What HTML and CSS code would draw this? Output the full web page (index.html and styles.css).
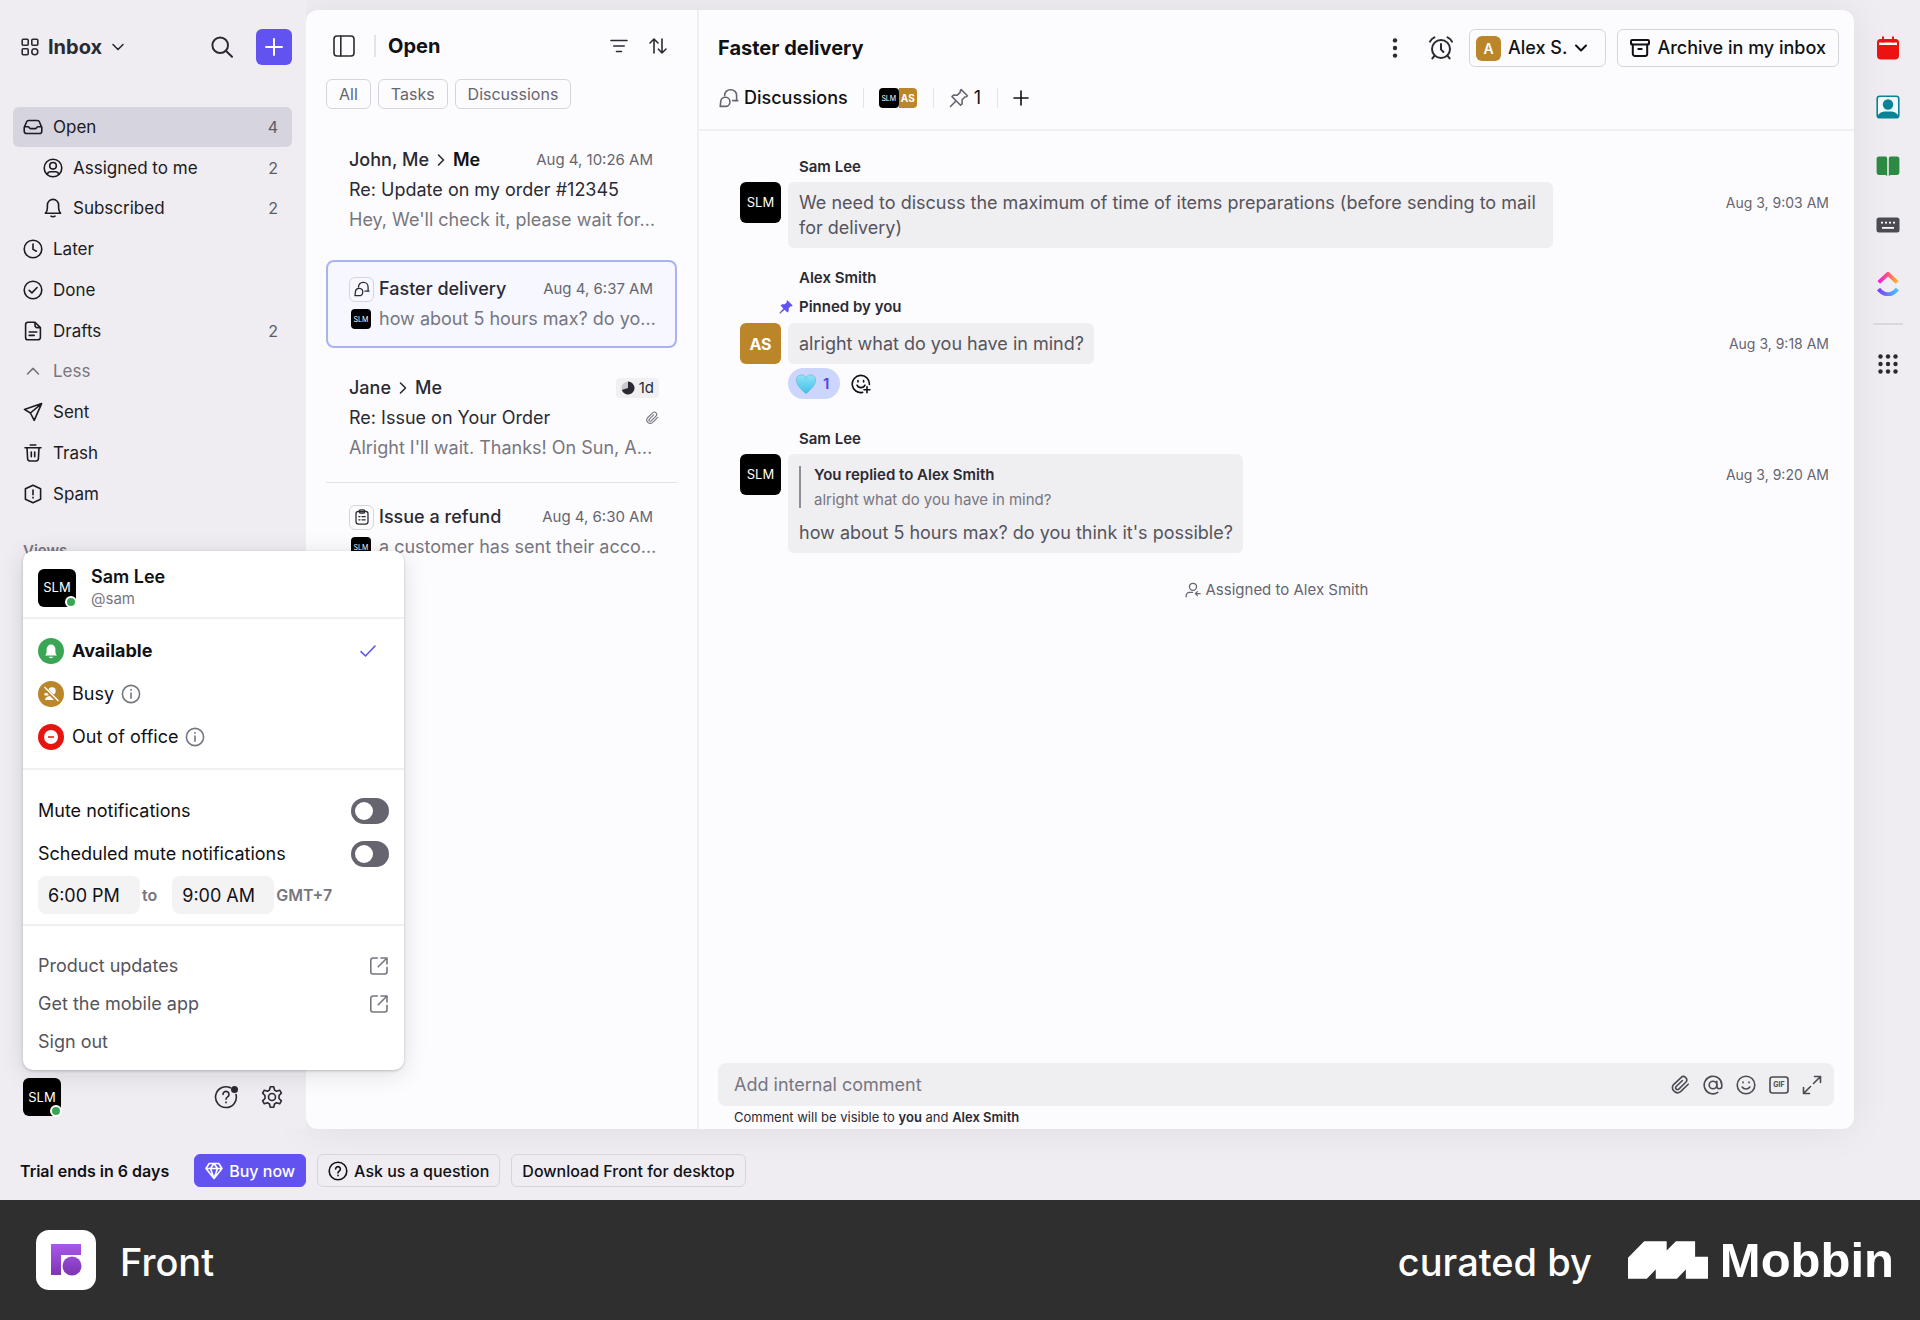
FILE: index.html
```html
<!DOCTYPE html>
<html lang="en">
<head>
  <meta charset="UTF-8" />
  <meta name="viewport" content="width=device-width, initial-scale=1.0" />
  <title>Front - Inbox</title>
  <link rel="stylesheet" href="styles.css">
</head>
<body>
  <!-- shared icons -->
  <svg class="sprite" aria-hidden="true">
    <symbol id="i-chat" viewBox="0 0 20 20">
      <path d="M5.600 7.600V7.400A5.600 5.600 0 0 1 11.200 1.800h.8a5.600 5.600 0 0 1 5.600 5.600V12.600h1.200M17.600 12.600H13.600"/>
      <path d="M1.200 18.400l.6-5.200a4.600 4.600 0 1 1 4.600 5.200z"/>
    </symbol>
    <symbol id="i-down" viewBox="0 0 14 14"><path d="M2 4.500l5 5 5-5"/></symbol>
    <symbol id="i-right" viewBox="0 0 14 14"><path d="M4.500 2l5 5-5 5"/></symbol>
    <symbol id="i-info" viewBox="0 0 20 20">
      <circle cx="10" cy="10" r="8.600"/><path d="M10 9v5.200M10 5.600v.6"/>
    </symbol>
    <symbol id="i-external" viewBox="0 0 20 20">
      <path d="M8.400 2H4a2.200 2.200 0 0 0-2.200 2.200v11.600A2.200 2.200 0 0 0 4 18h11.800a2.200 2.200 0 0 0 2.200-2.200v-4.400M9.200 10.800L18 2M12 2h6v6"/>
    </symbol>
    <symbol id="i-clip" viewBox="0 0 20 20">
      <path d="M18.200 9.200l-7.600 7.400a5 5 0 0 1-7-7L11 2.600a3.300 3.300 0 0 1 4.700 4.700L8.800 14.100a1.800 1.800 0 0 1-2.600-2.600l6.200-6"/>
    </symbol>
    <symbol id="i-help" viewBox="0 0 20 20">
      <circle cx="10" cy="10" r="8.800"/><path d="M7.600 8a2.400 2.400 0 1 1 3.600 2.100c-.8.5-1.200.9-1.200 1.800M10 14.200v.6"/>
    </symbol>
  </svg>

  <div class="app">
    <aside class="sidebar">
      <div class="sidebar-top">
        <button class="workspace">
          <svg class="icon s18" viewBox="0 0 18 18"><rect x="1.200" y="1.200" width="6" height="6" rx="1"/><rect x="10.800" y="1.200" width="6" height="6" rx="1"/><rect x="1.200" y="10.800" width="6" height="6" rx="1"/><circle cx="13.800" cy="13.800" r="3"/></svg>
          <span>Inbox</span>
          <svg class="icon s14"><use href="#i-down"/></svg>
        </button>
        <button class="search" aria-label="Search">
          <svg class="icon s22" viewBox="0 0 22 22"><circle cx="9.200" cy="9.200" r="7.800"/><path d="M14.800 14.800l6.200 6"/></svg>
        </button>
        <button class="compose" aria-label="Compose">
          <svg class="icon s18" viewBox="0 0 18 18"><path d="M9 1v16M1 9h16"/></svg>
        </button>
      </div>

      <nav>
        <ul class="nav-list">
          <li><a class="nav-item active" href="#">
            <svg class="icon s20" viewBox="0 0 20 20"><path d="M1.200 10.600l2.200-5.400a2.600 2.600 0 0 1 2.400-1.700h8.400a2.600 2.600 0 0 1 2.400 1.700l2.200 5.400v3.600a2.300 2.300 0 0 1-2.300 2.300h-13a2.300 2.300 0 0 1-2.300-2.300zM1.400 9.800h3.800c1 0 1.400 1.800 2.600 1.800h4.400c1.200 0 1.600-1.800 2.600-1.800h3.800"/></svg>
            <span>Open</span><span class="count">4</span></a></li>
          <li>
            <ul class="nav-sub">
              <li><a class="nav-item" href="#">
                <svg class="icon s20" viewBox="0 0 20 20"><circle cx="10" cy="10" r="8.800"/><circle cx="10" cy="7.800" r="3.300"/><path d="M4.200 16.400c.6-2 1.800-2.600 3.200-2.600h5.200c1.400 0 2.600.6 3.200 2.600"/></svg>
                <span>Assigned to me</span><span class="count">2</span></a></li>
              <li><a class="nav-item" href="#">
                <svg class="icon s20" viewBox="0 0 20 20"><path d="M2.400 15.200c1.800-1.600 2-3 2-5.400V7a5.600 5.600 0 0 1 11.200 0v2.800c0 2.400.2 3.800 2 5.400zM8 18.200c.8.7 3.200.7 4 0"/></svg>
                <span>Subscribed</span><span class="count">2</span></a></li>
            </ul>
          </li>
          <li><a class="nav-item" href="#">
            <svg class="icon s20" viewBox="0 0 20 20"><circle cx="10" cy="10" r="8.800"/><path d="M10 5v5.400l3.400 1.800"/></svg>
            <span>Later</span></a></li>
          <li><a class="nav-item" href="#">
            <svg class="icon s20" viewBox="0 0 20 20"><circle cx="10" cy="10" r="8.800"/><path d="M6.200 10.400l2.700 2.500 5.200-5.400"/></svg>
            <span>Done</span></a></li>
          <li><a class="nav-item" href="#">
            <svg class="icon s20" viewBox="0 0 20 20"><path d="M12 1.200H5A2.400 2.400 0 0 0 2.600 3.600v12.800A2.400 2.400 0 0 0 5 18.800h10a2.400 2.400 0 0 0 2.400-2.400V6.600zM12 1.200v3.200a2.200 2.200 0 0 0 2.200 2.200h3.200M6.200 11h7.600M6.200 14.400h5"/></svg>
            <span>Drafts</span><span class="count">2</span></a></li>
        </ul>
        <ul class="nav-list">
          <li><button class="nav-item less">
            <svg class="icon s20" viewBox="0 0 20 20"><path d="M4.500 13L10 7.400l5.500 5.600"/></svg>
            <span>Less</span></button></li>
          <li><a class="nav-item" href="#">
            <svg class="icon s20" viewBox="0 0 20 20"><path d="M18.600 1.600L1.400 7.400l6 3.600 3.800 7.400zM7.400 11l11.200-9.400"/></svg>
            <span>Sent</span></a></li>
          <li><a class="nav-item" href="#">
            <svg class="icon s20" viewBox="0 0 20 20"><path d="M2 4.800h16M7.200 2h5.600M4 4.800l.6 11a2.400 2.400 0 0 0 2.400 2.200h6a2.400 2.400 0 0 0 2.400-2.200l.6-11M8.300 9v4.800M11.700 9v4.800"/></svg>
            <span>Trash</span></a></li>
          <li><a class="nav-item" href="#">
            <svg class="icon s20" viewBox="0 0 20 20"><path d="M10 1.200l7.600 3.600v10.400L10 18.800l-7.600-3.600V4.800zM10 6v4.800M10 13.200v.8"/></svg>
            <span>Spam</span></a></li>
        </ul>
        <h2 class="nav-title">Views</h2>
      </nav>

      <div class="sidebar-bottom">
        <button class="avatar md" aria-label="Your profile">SLM<i class="presence"></i></button>
        <button class="help" aria-label="Help">
          <svg class="icon s24" viewBox="0 0 24 24"><path d="M16.500 2.800A10.400 10.400 0 1 0 22 9.500"/><path d="M9 9.400a3 3 0 1 1 4.600 2.500c-1 .7-1.600 1.200-1.600 2.300M12 17v.7"/><circle cx="20.500" cy="4.500" r="3.500" class="fill"/></svg>
        </button>
        <button aria-label="Settings">
          <svg class="icon s24" viewBox="0 0 24 24"><path d="M10.300 1.800h3.400l.8 3.200 2 1.200 3.200-1 1.700 3-2.400 2.300v3l2.400 2.300-1.700 3-3.200-1-2 1.200-.8 3.200h-3.400l-.8-3.200-2-1.200-3.200 1-1.700-3L5 13.500v-3L2.600 8.200l1.700-3 3.200 1 2-1.200z"/><circle cx="12" cy="12" r="3.500"/></svg>
        </button>

        <div class="menu">
          <div class="menu-user">
            <span class="avatar md">SLM<i class="presence"></i></span>
            <div>
              <strong>Sam Lee</strong>
              <span>@sam</span>
            </div>
          </div>
          <div class="menu-status">
            <label class="status">
              <input type="radio" name="status" checked>
              <svg class="dot" viewBox="0 0 26 26"><circle cx="13" cy="13" r="13" fill="#3aa655"/><path d="M7 17.600c1.200-1.300 1.600-2.400 1.600-4.600v-2a4.400 4.400 0 0 1 8.800 0v2c0 2.200.4 3.300 1.600 4.600zM10.800 18.800h4.400a2.200 1.400 0 0 1-4.400 0z" fill="#fff"/></svg>
              <span>Available</span>
              <svg class="icon s18 tick" viewBox="0 0 18 18"><path d="M2 9.600l4.500 4.400L16 4"/></svg>
            </label>
            <label class="status">
              <input type="radio" name="status">
              <svg class="dot" viewBox="0 0 26 26"><circle cx="13" cy="13" r="13" fill="#bb862a"/><circle cx="14" cy="10" r="3.700" fill="#fff"/><path d="M7 19c.5-3 2.500-4 6-4s5.500 1 6 4zM6.500 12h4v2.500h-4z" fill="#fff"/><path d="M6 6.500l14 14" stroke="#bb862a" stroke-width="3.500"/><path d="M6.500 6l14 14" stroke="#fff" stroke-width="1.500"/></svg>
              <span>Busy</span>
              <svg class="icon s20 info"><use href="#i-info"/></svg>
            </label>
            <label class="status">
              <input type="radio" name="status">
              <svg class="dot" viewBox="0 0 26 26"><circle cx="13" cy="13" r="13" fill="#e8140f"/><circle cx="13" cy="13" r="7" fill="#fff"/><path d="M10 13h6" stroke="#e8140f" stroke-width="1.500"/></svg>
              <span>Out of office</span>
              <svg class="icon s20 info"><use href="#i-info"/></svg>
            </label>
          </div>
          <div class="menu-mute">
            <label class="mute">Mute notifications <input class="toggle" type="checkbox"></label>
            <label class="mute">Scheduled mute notifications <input class="toggle" type="checkbox"></label>
            <div class="hours">
              <input type="text" value="6:00 PM" aria-label="Mute from">
              <span class="to">to</span>
              <input type="text" value="9:00 AM" aria-label="Mute until">
              <span>GMT+7</span>
            </div>
          </div>
          <div class="menu-links">
            <a href="#">Product updates <svg class="icon s20"><use href="#i-external"/></svg></a>
            <a href="#">Get the mobile app <svg class="icon s20"><use href="#i-external"/></svg></a>
            <a href="#">Sign out</a>
          </div>
        </div>
      </div>
    </aside>

    <main class="panel">
      <section class="list">
        <div class="list-top">
          <button aria-label="Toggle sidebar">
            <svg class="icon s22" viewBox="0 0 22 22"><rect x="1" y="1" width="20" height="20" rx="3"/><path d="M7.800 1v20"/></svg>
          </button>
          <h1>Open</h1>
          <button aria-label="Filter">
            <svg class="icon s20" viewBox="0 0 20 20"><path d="M2 4.500h16M4.800 10h10.400M7.500 15.500h5"/></svg>
          </button>
          <button aria-label="Sort">
            <svg class="icon s20" viewBox="0 0 20 20"><path d="M6 17V3M2 7l4-4 4 4M14 3v14M10.500 13.200L14 17l4-4"/></svg>
          </button>
        </div>
        <div class="chips">
          <button>All</button>
          <button>Tasks</button>
          <button>Discussions</button>
        </div>

        <div class="threads">
          <a class="thread" href="#">
            <div class="line">
              <span class="who">John, Me</span>
              <svg class="icon s14"><use href="#i-right"/></svg>
              <span class="who unread">Me</span>
              <time>Aug 4, 10:26 AM</time>
            </div>
            <div class="line subject">Re: Update on my order #12345</div>
            <div class="line preview">Hey, We'll check it, please wait for…</div>
          </a>
          <a class="thread selected" href="#">
            <div class="line">
              <span class="type"><svg class="icon s16"><use href="#i-chat"/></svg></span>
              <span class="who">Faster delivery</span>
              <time>Aug 4, 6:37 AM</time>
            </div>
            <div class="line preview"><span class="avatar xs">SLM</span>how about 5 hours max? do yo…</div>
          </a>
          <a class="thread" href="#">
            <div class="line">
              <span class="who">Jane</span>
              <svg class="icon s14"><use href="#i-right"/></svg>
              <span class="who">Me</span>
              <span class="age"><svg viewBox="0 0 14 14"><circle cx="7" cy="7" r="6.500" fill="#c9c9d0"/><path d="M7 7V.500a6.500 6.500 0 1 1-6.200 8.500z" fill="#2b2a33"/></svg>1d</span>
            </div>
            <div class="line subject">Re: Issue on Your Order <svg class="icon s14 attach"><use href="#i-clip"/></svg></div>
            <div class="line preview">Alright I'll wait. Thanks! On Sun, A…</div>
          </a>
          <a class="thread divided" href="#">
            <div class="line">
              <span class="type"><svg class="icon s16" viewBox="0 0 20 20"><rect x="2.500" y="3" width="15" height="16" rx="3"/><rect x="6.500" y="1" width="7" height="4" rx="1.500"/><path d="M6 9.500h1.500M10 9.500h4M6 13.500h1.500M10 13.500h4"/></svg></span>
              <span class="who">Issue a refund</span>
              <time>Aug 4, 6:30 AM</time>
            </div>
            <div class="line preview"><span class="avatar xs">SLM</span>a customer has sent their acco…</div>
          </a>
        </div>
      </section>

      <section class="conversation">
        <header class="conv-head">
          <div class="conv-title">
            <h2>Faster delivery</h2>
            <button aria-label="More">
              <svg class="icon s22" viewBox="0 0 22 22"><circle cx="11" cy="3.400" r="2.200" class="fill"/><circle cx="11" cy="11" r="2.200" class="fill"/><circle cx="11" cy="18.600" r="2.200" class="fill"/></svg>
            </button>
            <button class="snooze" aria-label="Snooze">
              <svg class="icon s24" viewBox="0 0 24 24"><circle cx="12" cy="13" r="9"/><path d="M12 8v5.400l2.400 2.600M1 5.600C2 3.600 3.400 2.300 5.400 1.400M23 5.600c-1-2-2.400-3.300-4.400-4.200M5.600 19.600L3.400 22.400M18.400 19.600l2.200 2.800"/></svg>
            </button>
            <button class="btn assignee"><span class="avatar-letter">A</span>Alex S. <svg class="icon s14"><use href="#i-down"/></svg></button>
            <button class="btn archive">
              <svg class="icon s20" viewBox="0 0 20 20"><rect x="1" y="2" width="18" height="4.600" rx="1.200"/><path d="M2.800 6.600v9.200A2.200 2.200 0 0 0 5 18h10a2.200 2.200 0 0 0 2.200-2.200V6.600M8.300 11h3.400"/></svg>
              Archive in my inbox
            </button>
          </div>
          <div class="conv-meta">
            <span class="meta kind"><svg class="icon s20"><use href="#i-chat"/></svg>Discussions</span>
            <span class="meta people"><span class="avatar xs">SLM</span><span class="avatar xs gold">AS</span></span>
            <span class="meta pins"><svg class="icon s20" viewBox="0 0 20 20"><path d="M1.500 18.500l5.200-5.200M12.200 1.600l6.200 6.200-1 1-1.600.2-2.800 3 .2 3.600-1.600 1.600L3 8.600 4.600 7l3.600.2 3-2.800.2-1.800z"/></svg>1</span>
            <button class="meta" aria-label="Add">
              <svg class="icon s16" viewBox="0 0 16 16"><path d="M8 1v14M1 8h14"/></svg>
            </button>
          </div>
        </header>

        <div class="messages">
          <article class="message">
            <h3>Sam Lee</h3>
            <div class="msg-row">
              <span class="avatar lg">SLM</span>
              <div class="bubble">We need to discuss the maximum of time of items preparations (before sending to mail for delivery)</div>
              <time>Aug 3, 9:03 AM</time>
            </div>
          </article>
          <article class="message">
            <h3>Alex Smith</h3>
            <h4><svg class="pin" viewBox="0 0 20 20"><path d="M12 .5L19.500 8l-1.500 1.200-1.600-.2-2.600 3 .2 3.600-2 2.200-4-4L1.500 19.500l-1-1L6.200 12 2.200 8l2.200-2 3.600.2 3-2.600-.2-1.600z"/></svg>Pinned by you</h4>
            <div class="msg-row">
              <span class="avatar lg gold">AS</span>
              <div class="bubble">alright what do you have in mind?</div>
              <time>Aug 3, 9:18 AM</time>
            </div>
            <div class="reactions">
              <button class="reaction">
                <svg viewBox="0 0 20 20"><defs><linearGradient id="heart" x1="0" y1="0" x2="0" y2="1"><stop offset="0" stop-color="#8fe3f7"/><stop offset="1" stop-color="#3fbfe8"/></linearGradient></defs><path d="M10 19.800C4.500 14.800.5 11 .5 6.200a4.900 4.900 0 0 1 9.500-2 4.900 4.900 0 0 1 9.500 2c0 4.800-4 8.600-9.500 13.600z" fill="url(#heart)" stroke="#5fb4d0" stroke-width=".6"/></svg>
                1
              </button>
              <button aria-label="Add reaction">
                <svg class="icon s20" viewBox="0 0 20 20"><path d="M11.600 18.400A8.600 8.600 0 1 1 18.400 10.400"/><path d="M6 11.200c1.600 3.200 6.400 3.200 8 0M7 6.600v1.400M12.600 6.600v1.400M16 12.800v6M13 15.800h6"/></svg>
              </button>
            </div>
          </article>
          <article class="message">
            <h3>Sam Lee</h3>
            <div class="msg-row">
              <span class="avatar lg">SLM</span>
              <div class="bubble">
                <blockquote><strong>You replied to Alex Smith</strong>alright what do you have in mind?</blockquote>
                how about 5 hours max? do you think it's possible?
              </div>
              <time>Aug 3, 9:20 AM</time>
            </div>
          </article>
          <p class="event"><svg class="icon s16" viewBox="0 0 20 20"><circle cx="10" cy="6" r="4.400"/><path d="M1.500 18.500v-1.500a4 4 0 0 1 4-4h4M19 14.500h-6M15.500 12l-2.500 2.500 2.500 2.500"/></svg>Assigned to Alex Smith</p>
        </div>

        <div class="composer">
          <div class="composer-box">
            <input type="text" placeholder="Add internal comment" aria-label="Add internal comment">
            <button aria-label="Attach"><svg class="icon s20"><use href="#i-clip"/></svg></button>
            <button aria-label="Mention"><svg class="icon s20" viewBox="0 0 20 20"><circle cx="10" cy="10" r="3.800"/><path d="M13.800 6.200v5a2.500 2.500 0 0 0 5 0V10a8.800 8.800 0 1 0-4 7.400"/></svg></button>
            <button aria-label="Emoji"><svg class="icon s20" viewBox="0 0 20 20"><circle cx="10" cy="10" r="8.800"/><path d="M6.200 12c1.600 2.600 6 2.600 7.600 0M7 7v.8M13 7v.8"/></svg></button>
            <button aria-label="GIF"><svg class="icon s20" viewBox="0 0 20 20"><rect x="1" y="2" width="18" height="16" rx="2.500"/><text x="10" y="12.400">GIF</text></svg></button>
            <button aria-label="Expand"><svg class="icon s20" viewBox="0 0 20 20"><path d="M11.500 8.500l7-7M12.500 1.500h6v6M8.500 11.500l-7 7M1.500 12.500v6h6"/></svg></button>
          </div>
          <p>Comment will be visible to <b>you</b> and <b>Alex Smith</b></p>
        </div>
      </section>
    </main>

    <aside class="rail">
      <button aria-label="Calendar"><svg viewBox="0 0 24 24"><path d="M4.500 3h15A3.500 3.500 0 0 1 23 6.500v13a4 4 0 0 1-4 4H5a4 4 0 0 1-4-4v-13A3.500 3.500 0 0 1 4.500 3z" fill="#ee1111"/><path d="M3 6.500h18v2.500H3z" fill="#fff"/><path d="M7 .5v6M17 .5v6" stroke="#ee1111" stroke-width="2"/></svg></button>
      <button aria-label="Contacts"><svg viewBox="0 0 24 24"><rect x="1.200" y="1.200" width="21.600" height="21.600" rx="2.600" fill="#f0fafb" stroke="#0a8494" stroke-width="1.600"/><circle cx="12" cy="9.500" r="5.200" fill="#0a8494"/><path d="M2 22.500v-2.500c2.200-2.800 4.600-3.600 7-3.600h6c2.400 0 4.800.8 7 3.600v2.500z" fill="#0a8494"/></svg></button>
      <button aria-label="Knowledge base"><svg viewBox="0 0 24 24"><path d="M3 2.500h6A2 2 0 0 1 11.200 4.500v17.500L9.500 21H3a2.400 2.400 0 0 1-2.400-2.400V5A2.400 2.400 0 0 1 3 2.500zM21 2.500h-6A2 2 0 0 0 12.800 4.500v17.500l1.700-1H21a2.400 2.400 0 0 0 2.400-2.400V5A2.400 2.400 0 0 0 21 2.500z" fill="#2c8a43"/></svg></button>
      <button aria-label="Shortcuts"><svg viewBox="0 0 24 24"><rect x=".5" y="4.500" width="23" height="15" rx="2.500" fill="#4c4a52"/><path d="M5 9.700h2M9 9.700h2M13 9.700h2M17 9.700h2M6 14.800h12" stroke="#fff" stroke-width="1.700"/></svg></button>
      <button aria-label="ClickUp"><svg viewBox="0 0 24 24"><defs><linearGradient id="cu1"><stop offset="0" stop-color="#f01ee0"/><stop offset=".5" stop-color="#fb5779"/><stop offset="1" stop-color="#ffb52b"/></linearGradient><linearGradient id="cu2"><stop offset="0" stop-color="#7a3ff5"/><stop offset="1" stop-color="#4cc2fb"/></linearGradient></defs><path d="M2.800 10.400L12 1.900l9.200 8.500" fill="none" stroke="url(#cu1)" stroke-width="4"/><path d="M2.600 17c5.200 7 13.600 7 18.800 0" fill="none" stroke="url(#cu2)" stroke-width="4"/></svg></button>
      <hr>
      <button aria-label="All apps"><svg viewBox="0 0 24 24" fill="#2b2a33"><circle cx="4.500" cy="4.500" r="2.200"/><circle cx="12" cy="4.500" r="2.200"/><circle cx="19.500" cy="4.500" r="2.200"/><circle cx="4.500" cy="12" r="2.200"/><circle cx="12" cy="12" r="2.200"/><circle cx="19.500" cy="12" r="2.200"/><circle cx="4.500" cy="19.500" r="2.200"/><circle cx="12" cy="19.500" r="2.200"/><circle cx="19.500" cy="19.500" r="2.200"/></svg></button>
    </aside>

    <div class="trial">
      <strong>Trial ends in 6 days</strong>
      <button class="btn-sm buy"><svg class="icon s18" viewBox="0 0 18 18"><path d="M4.200 1.500h9.600L17 6.500l-8 10-8-10zM1 6.500h16M9 1.500L5.500 6.500l3.500 10 3.500-10z"/></svg>Buy now</button>
      <button class="btn-sm"><svg class="icon s20"><use href="#i-help"/></svg>Ask us a question</button>
      <button class="btn-sm">Download Front for desktop</button>
    </div>
  </div>

  <footer class="credit">
    <svg class="front-logo" viewBox="0 0 60 60"><defs><linearGradient id="front" x1="0" y1="14" x2="0" y2="46" gradientUnits="userSpaceOnUse"><stop offset="0" stop-color="#a958ea"/><stop offset="1" stop-color="#7c33b3"/></linearGradient></defs><rect width="60" height="60" rx="13" fill="#fff"/><path d="M15 14h30v11H25v20H15z" fill="url(#front)"/><circle cx="36" cy="36" r="9.500" fill="url(#front)"/></svg>
    <span class="brand">Front</span>
    <span class="curated">curated by</span>
    <svg class="mobbin-logo" viewBox="81 600 242 113"><path d="M81 650l49-50h68v28l28-28h58v47h39v66h-67v-28l-27 28h-64v-28l-27 28H81z" fill="#fff"/></svg>
    <span class="mobbin">Mobbin</span>
  </footer>
</body>
</html>
```

FILE: styles.css
```css
* {
  box-sizing: border-box;
}

body {
  margin: 0;
  min-height: 100vh;
  display: flex;
  flex-direction: column;
  font-family: Inter, "Liberation Sans", sans-serif;
  font-size: 18px;
  line-height: 24px;
  color: #111114;
  background: #efedf2;
}

h1, h2, h3, h4, p, ul, blockquote {
  margin: 0;
  padding: 0;
}

ul {
  list-style: none;
}

a {
  color: inherit;
  text-decoration: none;
}

button, input {
  font: inherit;
  color: inherit;
}

button {
  display: flex;
  align-items: center;
  padding: 0;
  border: none;
  background: none;
  cursor: pointer;
}

/* icons */
.sprite {
  position: absolute;
  width: 0;
  height: 0;
}

.icon {
  flex: none;
  fill: none;
  stroke: currentColor;
  stroke-width: 1.6;
  stroke-linecap: round;
  stroke-linejoin: round;
}

.icon .fill {
  fill: currentColor;
  stroke: none;
}

.icon text {
  fill: currentColor;
  stroke: none;
  font-size: 7px;
  font-weight: 700;
  text-anchor: middle;
}

.s14 { width: 14px; height: 14px; }
.s16 { width: 16px; height: 16px; }
.s18 { width: 18px; height: 18px; }
.s20 { width: 20px; height: 20px; }
.s22 { width: 22px; height: 22px; }
.s24 { width: 24px; height: 24px; }

/* avatars */
.avatar {
  position: relative;
  flex: none;
  display: flex;
  align-items: center;
  justify-content: center;
  background: #000;
  color: #fff;
  line-height: 1;
}

.avatar.xs {
  width: 20px;
  height: 20px;
  border-radius: 4px;
  font-size: 7px;
}

.avatar.md {
  width: 38px;
  height: 38px;
  border-radius: 6px;
  font-size: 13px;
}

.avatar.lg {
  width: 41px;
  height: 41px;
  border-radius: 6px;
  font-size: 13px;
}

.avatar.gold {
  background: #bb862a;
  font-weight: 700;
}

.avatar.xs.gold {
  font-size: 10px;
}

.avatar.lg.gold {
  font-size: 16px;
}

.presence {
  position: absolute;
  right: -1px;
  bottom: -1px;
  width: 12px;
  height: 12px;
  border: 2px solid #fff;
  border-radius: 50%;
  background: #3aa655;
}

/* layout */
.app {
  flex: 1;
  display: grid;
  grid-template-columns: 306px minmax(0, 1fr) 66px;
  grid-template-rows: 1fr auto;
}

.sidebar {
  position: relative;
  z-index: 2;
  display: flex;
  flex-direction: column;
  padding: 29px 14px 13px 13px;
  background: #efedf2;
  color: #1c1b22;
}

.sidebar-top {
  display: flex;
  align-items: center;
  gap: 23px;
  margin-bottom: 42px;
  padding-left: 8px;
  color: #2b2a33;
}

.workspace {
  gap: 9px;
  margin-right: auto;
  font-size: 20px;
  font-weight: 700;
}

.compose {
  width: 36px;
  height: 36px;
  justify-content: center;
  border-radius: 6px;
  background: #6253f1;
  color: #fff;
}

.search .icon,
.compose .icon {
  stroke-width: 2;
}

.nav-list {
  display: grid;
  gap: 1px;
}

.nav-sub {
  padding-left: 20px;
}

.nav-item {
  display: flex;
  align-items: center;
  gap: 10px;
  width: 100%;
  height: 40px;
  padding: 0 14px 0 10px;
  border-radius: 6px;
  font-size: 17px;
}

.nav-item.active {
  background: #d5d4df;
}

.nav-item.less {
  color: #77767f;
}

.nav-item .count {
  margin-left: auto;
  font-size: 16px;
  color: #5c5b64;
}

.nav-title {
  margin-top: 27px;
  padding-left: 10px;
  font-size: 15px;
  line-height: 20px;
  font-weight: 600;
  color: #77767f;
}

.sidebar-bottom {
  position: relative;
  display: flex;
  align-items: center;
  gap: 22px;
  margin-top: auto;
  padding: 0 8px 0 10px;
  color: #2b2a33;
}

.help {
  margin-left: auto;
}

/* profile menu */
.menu {
  position: absolute;
  left: 10px;
  bottom: calc(100% + 8px);
  width: 381px;
  border-radius: 10px;
  background: #fff;
  color: #111114;
  box-shadow: 0 1px 3px rgba(0, 0, 0, 0.2), 0 4px 24px rgba(0, 0, 0, 0.12);
}

.menu-user {
  display: flex;
  align-items: center;
  gap: 15px;
  padding: 14px 15px 7px;
}

.menu-user strong,
.menu-user div span {
  display: block;
}

.menu-user strong {
  line-height: 23px;
  font-weight: 600;
}

.menu-user div span {
  font-size: 15px;
  line-height: 22px;
  color: #77767f;
}

.menu-status,
.menu-mute,
.menu-links {
  border-top: 2px solid #f0f0f2;
}

.menu-status {
  padding: 10px 15px;
}

.status {
  display: flex;
  align-items: center;
  height: 43px;
}

.status input {
  position: absolute;
  opacity: 0;
}

.status .dot {
  width: 26px;
  height: 26px;
  margin-right: 8px;
}

.status input:checked ~ span {
  font-weight: 700;
}

.tick {
  margin-left: auto;
  margin-right: 12px;
  color: #6253f1;
}

.info {
  margin-left: 7px;
  color: #77767f;
}

.menu-mute {
  padding: 19px 15px 10px;
}

.mute {
  display: flex;
  align-items: center;
  justify-content: space-between;
  height: 43px;
}

.toggle {
  appearance: none;
  width: 38px;
  height: 26px;
  margin: 0;
  padding: 4px;
  border-radius: 13px;
  background: #66656f;
}

.toggle::before {
  content: "";
  display: block;
  width: 18px;
  height: 18px;
  border-radius: 50%;
  background: #fff;
}

.toggle:checked::before {
  margin-left: auto;
}

.hours {
  display: flex;
  align-items: center;
  gap: 2px;
  margin-top: 1px;
  font-size: 16px;
  font-weight: 600;
  color: #77767f;
}

.hours input {
  width: 102px;
  height: 38px;
  padding: 0 10px;
  border: none;
  border-radius: 8px;
  background: #f3f3f4;
  font-size: 18px;
  font-weight: 400;
  color: #111114;
}

.hours .to {
  margin-right: 13px;
}

.menu-links {
  padding: 21px 15px 9px;
}

.menu-links a {
  display: flex;
  align-items: center;
  justify-content: space-between;
  height: 38px;
  color: #55545c;
}

.menu-links .icon {
  color: #77767f;
}

/* main panel */
.panel {
  display: flex;
  min-width: 0;
  margin-top: 10px;
  border-radius: 12px;
  background: #fcfcfe;
  box-shadow: 0 0 40px rgba(0, 0, 0, 0.07);
}

.list {
  flex: none;
  width: 393px;
  padding: 21px 20px 0;
  border-right: 2px solid #f0f0f2;
}

.list-top {
  display: flex;
  align-items: center;
  gap: 19px;
  height: 30px;
  padding: 0 9px 0 7px;
  color: #2b2a33;
}

.list-top h1 {
  margin-right: auto;
  padding-left: 12px;
  border-left: 2px solid #e4e4e8;
  font-size: 20px;
  font-weight: 700;
  line-height: 22px;
  color: #111114;
}

.chips {
  display: flex;
  gap: 7px;
  margin-top: 18px;
}

.chips button {
  height: 30px;
  padding: 0 12px;
  border: 1px solid #d6d5dc;
  border-radius: 6px;
  font-size: 16px;
  color: #66656f;
}

.threads {
  display: grid;
  grid-template-columns: minmax(0, 1fr);
  gap: 11px;
  margin-top: 22px;
}

.thread {
  position: relative;
  display: block;
  padding: 13px 23px 13px 22px;
  border: 1px solid transparent;
  border-radius: 8px;
}

.thread.selected {
  padding: 12px 22px 12px 21px;
  border: 2px solid #aab3ef;
  background: #f6f7ff;
}

/* rule in the middle of the gap above */
.thread.divided::before {
  content: "";
  position: absolute;
  top: -7px;
  left: -1px;
  right: -1px;
  height: 1px;
  background: #e4e4e8;
}

.line {
  display: flex;
  align-items: center;
  height: 30px;
  gap: 5px;
  white-space: nowrap;
  color: #2b2a33;
}

.who {
  font-weight: 500;
}

.who.unread {
  font-weight: 600;
  color: #111114;
}

.line time {
  margin-left: auto;
  font-size: 15px;
  color: #66656f;
}

.line.preview {
  color: #77767f;
  gap: 8px;
}

.preview .avatar {
  margin-left: 2px;
}

.type {
  display: flex;
  align-items: center;
  justify-content: center;
  width: 25px;
  height: 25px;
  border: 1px solid #d6d5dc;
  border-radius: 6px;
}

.age {
  display: flex;
  align-items: center;
  gap: 4px;
  margin-left: auto;
  margin-right: -6px;
  padding: 0 5px;
  height: 20px;
  border-radius: 4px;
  background: #f0f0f2;
  font-size: 15px;
}

.age svg {
  width: 14px;
  height: 14px;
}

.attach {
  margin-left: auto;
  margin-right: -6px;
  color: #77767f;
}

/* conversation */
.conversation {
  flex: 1;
  min-width: 0;
  display: flex;
  flex-direction: column;
}

.conv-head {
  padding: 19px 15px 0 19px;
  border-bottom: 2px solid #f0f0f2;
}

.conv-title {
  display: flex;
  align-items: center;
  gap: 11px;
  color: #2b2a33;
}

.conv-title h2 {
  margin-right: auto;
  font-size: 20px;
  font-weight: 700;
  color: #111114;
}

.snooze {
  margin: 0 5px 0 12px;
}

.conv-title .icon {
  stroke-width: 2;
}

.btn {
  height: 38px;
  padding: 0 12px;
  gap: 7px;
  border: 1px solid #d6d5dc;
  border-radius: 6px;
  font-weight: 500;
  color: #111114;
}

.btn.assignee {
  padding: 0 17px 0 6px;
}

.avatar-letter {
  width: 25px;
  height: 25px;
  border-radius: 6px;
  background: #bb862a;
  color: #fff;
  font-size: 14px;
  font-weight: 600;
  line-height: 25px;
  text-align: center;
}

.conv-meta {
  display: flex;
  align-items: center;
  height: 62px;
}

.meta {
  display: flex;
  align-items: center;
  height: 20px;
  padding: 0 16px 0 15px;
  gap: 5px;
  border-right: 1px solid #e4e4e8;
}

.meta:last-child {
  border: none;
}

.meta.kind {
  padding: 0 15px 0 1px;
  font-weight: 500;
}

.meta.kind .icon,
.meta.pins .icon {
  color: #66656f;
}

.meta.people {
  gap: 0;
}

.meta.people .gold {
  width: 18px;
  border-radius: 0 4px 4px 0;
  overflow: hidden;
}

.messages {
  flex: 1;
  padding: 24px 25px 0 41px;
}

.message h3,
.message h4 {
  display: flex;
  align-items: center;
  margin-left: 59px;
  font-size: 15px;
  font-weight: 600;
  line-height: 24px;
  color: #2b2a33;
}

.message h3 {
  margin-bottom: 3px;
}

.message h4 {
  margin: 5px 0 4px 39px;
  gap: 6px;
}

.pin {
  width: 14px;
  height: 14px;
  fill: #6253f1;
}

.message + .message {
  margin-top: 18px;
}

.message:nth-child(3) {
  margin-top: 28px;
}

.msg-row {
  display: flex;
  align-items: flex-start;
  gap: 7px;
}

.bubble {
  max-width: 765px;
  padding: 8px 10px 8px 11px;
  border-radius: 6px;
  background: #efeef1;
  line-height: 25px;
  color: #55545c;
}

.msg-row time {
  margin-left: auto;
  font-size: 14px;
  line-height: 41px;
  color: #66656f;
}

.bubble blockquote {
  position: relative;
  margin-bottom: 8px;
  padding-left: 15px;
  font-size: 15px;
  color: #77767f;
}

.bubble blockquote::before {
  content: "";
  position: absolute;
  left: 0;
  top: 4px;
  bottom: 4px;
  width: 2px;
  background: #8f8e96;
}

.bubble strong {
  display: block;
  font-weight: 600;
  color: #2b2a33;
}

.reactions {
  display: flex;
  align-items: center;
  gap: 11px;
  margin: 4px 0 0 48px;
}

.reaction {
  gap: 7px;
  height: 31px;
  padding: 0 11px 0 8px;
  border-radius: 16px;
  background: #ccd5fb;
  font-size: 15px;
  font-weight: 600;
  color: #5044dc;
}

.reaction svg {
  width: 20px;
  height: 20px;
}

.event {
  display: flex;
  align-items: center;
  justify-content: center;
  gap: 5px;
  margin: 25px 0 0 -16px;
  font-size: 15px;
  color: #66656f;
}

.composer {
  padding: 0 20px 0 19px;
}

.composer-box {
  display: flex;
  align-items: center;
  gap: 13px;
  height: 43px;
  padding: 0 12px 0 16px;
  border-radius: 8px;
  background: #efeef1;
  color: #4c4a52;
}

.composer-box input {
  flex: 1;
  min-width: 0;
  padding: 0;
  border: none;
  outline: none;
  background: none;
}

.composer-box input::placeholder {
  color: #77767f;
}

.composer p {
  padding: 1px 0 1px 16px;
  font-size: 13px;
  line-height: 21px;
  color: #2b2a33;
}

.composer b {
  font-weight: 600;
}

/* app rail */
.rail {
  display: flex;
  flex-direction: column;
  align-items: center;
  gap: 35px;
  padding: 36px 0 0 2px;
}

.rail button svg {
  width: 24px;
  height: 24px;
}

.rail hr {
  width: 30px;
  height: 2px;
  margin: -8px 0;
  border: none;
  background: #d9d8de;
}

/* trial bar */
.trial {
  grid-column: 1 / -1;
  display: flex;
  align-items: center;
  gap: 11px;
  height: 71px;
  padding: 12px 20px 0;
}

.trial strong {
  margin-right: 14px;
  font-size: 16px;
  font-weight: 600;
}

.btn-sm {
  height: 33px;
  padding: 0 10px;
  gap: 6px;
  border: 1px solid #d6d5dc;
  border-radius: 6px;
  font-size: 16px;
  font-weight: 500;
}

.btn-sm.buy {
  border-color: #6253f1;
  background: #6253f1;
  color: #fff;
}

/* credit strip */
.credit {
  display: flex;
  align-items: center;
  height: 120px;
  padding: 0 26px 0 36px;
  background: #2f2f2f;
  color: #fff;
  font-size: 38px;
  font-weight: 500;
}

.front-logo {
  width: 60px;
  height: 60px;
}

.brand,
.curated {
  padding-top: 4px;
}

.brand {
  margin: 0 auto 0 24px;
}

.mobbin-logo {
  width: 80px;
  height: 38px;
  margin: 0 12px 0 36px;
}

.mobbin {
  font-family: "Liberation Sans", sans-serif;
  font-size: 49px;
  font-weight: 700;
}
```
